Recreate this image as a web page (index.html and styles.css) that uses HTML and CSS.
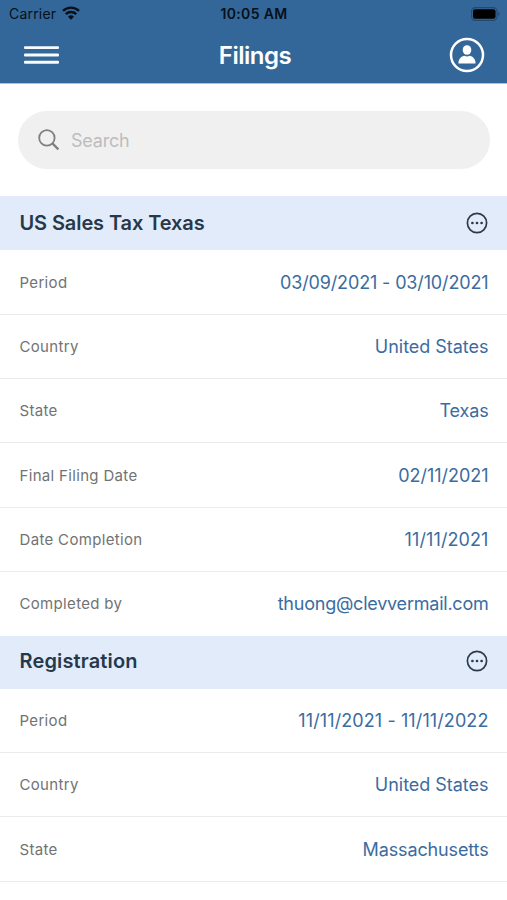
FILE: index.html
```html
<!doctype html>
<html lang="en">
<head>
    <meta charset="UTF-8">
    <meta name="viewport" content="width=device-width, initial-scale=1.0">
    <title>Filings</title>
    <link rel="stylesheet" href="styles.css">
</head>
<body>

<header class="header">
    <div class="status">
        <div class="carrier">
            <span>Carrier</span>
            <svg class="wifi" width="18" height="14" viewBox="0 0 18 14">
                <path d="M1 4.9a11.4 11.4 0 0 1 16 0M3.8 8.1a7.4 7.4 0 0 1 10.4 0" fill="none" stroke="#06101a" stroke-width="2.4"/>
                <path d="M9 13.8l-3-3.1a4.3 4.3 0 0 1 6 0z" fill="#06101a"/>
            </svg>
        </div>
        <div class="time">10:05 AM</div>
        <svg class="battery" width="29" height="14" viewBox="0 0 29 14">
            <rect x=".6" y=".6" width="25.4" height="12.8" rx="3.6" fill="none" stroke="#25496e" stroke-width="1.1"/>
            <rect x="2" y="2.3" width="22.5" height="9.4" rx="2" fill="#000"/>
            <path d="M27.3 5v4q1.4-.6 1.4-2t-1.4-2z" fill="#25496e"/>
        </svg>
    </div>
    <div class="nav">
        <svg class="menu" width="35" height="20" viewBox="0 0 35 20" fill="#f8fcff">
            <rect y="1.2" width="35" height="2.9" rx="1"/>
            <rect y="8.5" width="35" height="2.9" rx="1"/>
            <rect y="15.8" width="35" height="2.9" rx="1"/>
        </svg>
        <h1 class="title">Filings</h1>
        <svg class="user" width="36" height="36" viewBox="0 0 36 36">
            <circle cx="18" cy="18" r="16" fill="none" stroke="#fff" stroke-width="2.5"/>
            <ellipse cx="18" cy="13" rx="4.3" ry="4.8" fill="#fff"/>
            <path d="M9.4 26.6c0-5 3.2-7.4 6-7.8q2.6 1.2 5.2 0c2.8.4 6 2.8 6 7.8z" fill="#fff"/>
        </svg>
    </div>
</header>

<div class="search">
    <svg width="22" height="22" viewBox="0 0 22 22" fill="none" stroke="#808080">
        <circle cx="8.9" cy="8.9" r="7.7" stroke-width="1.8"/>
        <path d="M14.4 14.4l6 6" stroke-width="2.3"/>
    </svg>
    <span>Search</span>
</div>

<section class="filing">
    <div class="filing-head">
        <h2>US Sales Tax Texas</h2>
        <svg class="more" width="22" height="22" viewBox="0 0 22 22" fill="#2c3a4b">
            <circle cx="11" cy="11" r="9.6" fill="none" stroke="#2c3a4b" stroke-width="1.7"/>
            <circle cx="6.4" cy="11" r="1.35"/>
            <circle cx="11" cy="11" r="1.35"/>
            <circle cx="15.6" cy="11" r="1.35"/>
        </svg>
    </div>
    <div class="row">
        <span class="label">Period</span>
        <span class="value tight">03/09/2021 - 03/10/2021</span>
    </div>
    <div class="row">
        <span class="label">Country</span>
        <span class="value">United States</span>
    </div>
    <div class="row">
        <span class="label">State</span>
        <span class="value tight">Texas</span>
    </div>
    <div class="row">
        <span class="label">Final Filing Date</span>
        <span class="value">02/11/2021</span>
    </div>
    <div class="row">
        <span class="label">Date Completion</span>
        <span class="value wide">11/11/2021</span>
    </div>
    <div class="row row-last">
        <span class="label">Completed by</span>
        <span class="value email">thuong@clevvermail.com</span>
    </div>
</section>

<section class="filing">
    <div class="filing-head head-small">
        <h2>Registration</h2>
        <svg class="more" width="22" height="22" viewBox="0 0 22 22" fill="#2c3a4b">
            <circle cx="11" cy="11" r="9.6" fill="none" stroke="#2c3a4b" stroke-width="1.7"/>
            <circle cx="6.4" cy="11" r="1.35"/>
            <circle cx="11" cy="11" r="1.35"/>
            <circle cx="15.6" cy="11" r="1.35"/>
        </svg>
    </div>
    <div class="row">
        <span class="label">Period</span>
        <span class="value wide">11/11/2021 - 11/11/2022</span>
    </div>
    <div class="row">
        <span class="label">Country</span>
        <span class="value">United States</span>
    </div>
    <div class="row">
        <span class="label">State</span>
        <span class="value tight">Massachusetts</span>
    </div>
</section>

</body>
</html>
```
FILE: styles.css
```css
*{
    padding: 0;
    margin: 0;
    box-sizing: border-box;
}

body{
    background: #fff;
    font-family: Inter, 'Liberation Sans', sans-serif;
}
.header{
    height: 84px;
    background: #346799;
    border-bottom: 1px solid #a9c0d8;
}
.status{
    display: grid;
    grid-template-columns: 1fr auto 1fr;
    align-items: center;
    height: 27px;
    padding: 0 7px 0 9px;
    color: #06101a;
    font-size: 14px;
}
.carrier{
    display: flex;
    align-items: center;
    gap: 6px;
    letter-spacing: 0.2px;
}
.wifi{
    margin-top: -2px;
}
.time{
    padding-right: 1px;
    font-weight: 600;
    letter-spacing: 0.35px;
}
.battery{
    justify-self: end;
}
.nav{
    display: flex;
    justify-content: space-between;
    align-items: center;
    height: 56px;
    padding: 0 22px 0 24px;
}
.title{
    padding-left: 2px;
    color: #fff;
    font-size: 24px;
    font-weight: 600;
    letter-spacing: -0.5px;
}
.search{
    display: flex;
    align-items: center;
    gap: 11px;
    height: 58px;
    margin: 27px 17px 27px 18px;
    padding-left: 20px;
    border-radius: 29px;
    background: #f0f0f0;
    color: #bdbdbd;
    font-size: 18px;
    letter-spacing: -0.2px;
}
.filing-head{
    display: flex;
    justify-content: space-between;
    align-items: center;
    height: 54.4px;
    padding: 0 19.5px 0.4px;
    background: #e1ebfa;
}
.filing-head h2{
    color: #27384b;
    font-size: 20px;
    font-weight: 600;
    letter-spacing: -0.1px;
}
.head-small{
    height: 52.6px;
    padding-bottom: 3px;
}
.head-small h2{
    letter-spacing: 0.15px;
}
.row{
    display: flex;
    justify-content: space-between;
    align-items: center;
    height: 64.33px;
    padding: 0.4px 18.5px 0 19.5px;
    border-bottom: 1px solid #ebebeb;
}
.row-last{
    height: 64px;
    border-bottom-color: transparent;
}
.label{
    color: #717373;
    font-size: 15px;
    letter-spacing: 0.33px;
}
.value{
    color: #3b6c9f;
    font-size: 18px;
    letter-spacing: -0.03px;
}
.tight{
    letter-spacing: -0.14px;
}
.wide{
    letter-spacing: 0.1px;
}
.email{
    letter-spacing: -0.23px;
}
```
